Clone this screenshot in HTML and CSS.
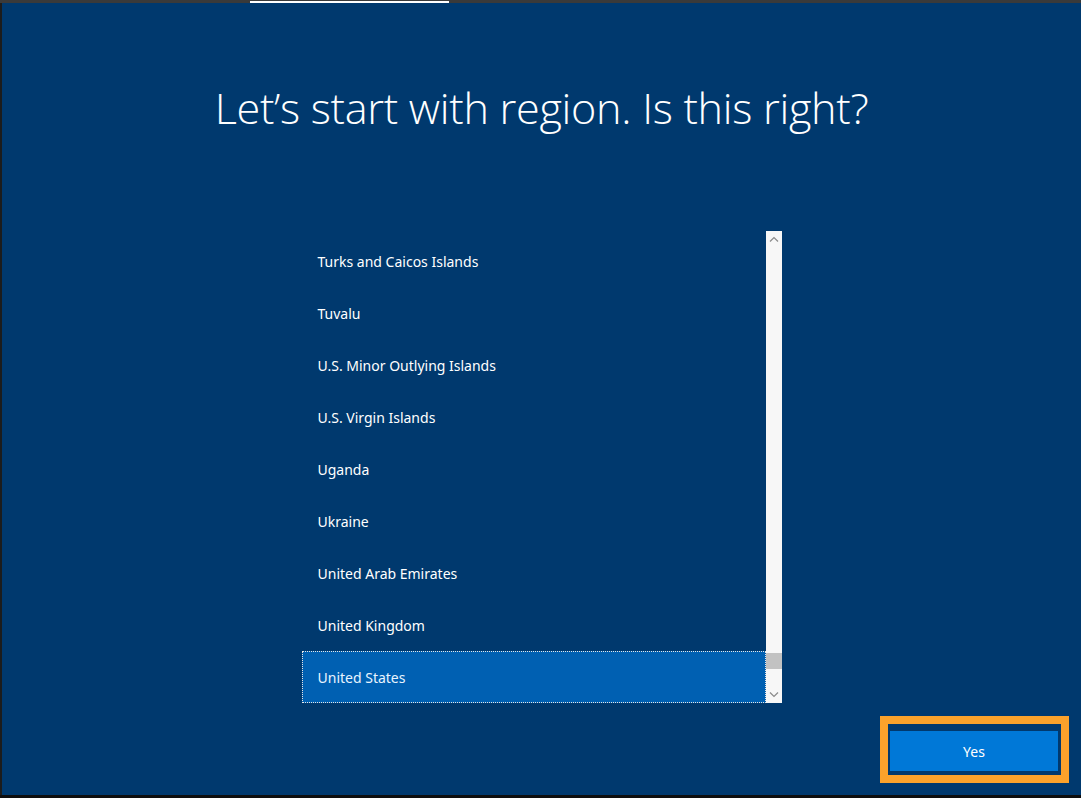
FILE: index.html
```html
<!DOCTYPE html>
<html lang="en">
<head>
<meta charset="utf-8">
<title>Region</title>
<link rel="stylesheet" href="styles.css">
</head>
<body>
<div class="screen">
  <div class="topbar"><div class="progress"></div></div>
  <div class="middle">
    <div class="side"></div>
    <main class="content">
      <h1 class="title">Let’s start with region. Is this right?</h1>
      <div class="listbox">
        <ul class="list">
          <li class="item">Turks and Caicos Islands</li>
          <li class="item">Tuvalu</li>
          <li class="item">U.S. Minor Outlying Islands</li>
          <li class="item">U.S. Virgin Islands</li>
          <li class="item">Uganda</li>
          <li class="item">Ukraine</li>
          <li class="item">United Arab Emirates</li>
          <li class="item">United Kingdom</li>
          <li class="item selected">United States</li>
        </ul>
        <div class="scrollbar">
          <div class="arrow">
            <svg width="10" height="6" viewBox="0 0 10 6"><path d="M1 5.5 L5 1.5 L9 5.5" fill="none" stroke="#8a8a8a" stroke-width="1.2"/></svg>
          </div>
          <div class="track"><div class="thumb"></div></div>
          <div class="arrow">
            <svg width="10" height="6" viewBox="0 0 10 6"><path d="M1 0.5 L5 4.5 L9 0.5" fill="none" stroke="#8a8a8a" stroke-width="1.2"/></svg>
          </div>
        </div>
      </div>
      <div class="actions">
        <div class="focus"><button class="yes">Yes</button></div>
      </div>
    </main>
  </div>
  <div class="bottombar"></div>
</div>
</body>
</html>
```

FILE: styles.css
```css
* { box-sizing: border-box; }
html, body {
  margin: 0;
  padding: 0;
  width: 1081px;
  height: 798px;
  overflow: hidden;
  background: #0e0e0e;
}
.screen {
  width: 1081px;
  height: 798px;
  display: flex;
  flex-direction: column;
}
.topbar {
  height: 3px;
  background: #3a3a3a;
  padding-left: 250px;
  display: flex;
  align-items: flex-end;
}
.progress {
  width: 199px;
  height: 2px;
  background: #ffffff;
}
.middle {
  flex: 1;
  display: flex;
}
.side {
  width: 2px;
  background: #1c1c1c;
}
.content {
  flex: 1;
  background: #00396e;
  display: flex;
  flex-direction: column;
  align-items: center;
}
.bottombar {
  height: 3px;
  background: #0e0e0e;
}
.title {
  margin: 75px 0 0 0;
  font-family: "Open Sans", "Noto Sans", sans-serif;
  font-weight: 300;
  font-size: 43.2px;
  line-height: 60px;
  color: #ffffff;
  letter-spacing: -0.3px;
}
.listbox {
  margin-top: 93px;
  width: 480px;
  height: 472px;
  display: flex;
}
.list {
  flex: 1;
  margin: 0;
  padding: 4px 0 0 0;
  list-style: none;
}
.item {
  height: 52px;
  display: flex;
  align-items: center;
  padding-left: 16px;
  font-family: "Noto Sans", "Open Sans", sans-serif;
  font-size: 14px;
  color: #ffffff;
}
.item.selected {
  background: #0060b2;
  border: 1px dotted #e6e6e6;
  padding-left: 15px;
  color: #e8f4ff;
}
.scrollbar {
  width: 16px;
  background: #f7f7f7;
  display: flex;
  flex-direction: column;
}
.arrow {
  height: 16px;
  display: flex;
  align-items: center;
  justify-content: center;
}
.track {
  flex: 1;
  display: flex;
  flex-direction: column;
  justify-content: flex-end;
  padding-bottom: 18px;
}
.thumb {
  height: 16px;
  background: #c2c2c2;
}
.actions {
  margin-top: auto;
  align-self: flex-end;
  padding: 0 12px 12px 0;
}
.focus {
  border: 8px solid #fba22b;
  padding: 7px 3px 4px 2px;
}
.yes {
  display: block;
  width: 168px;
  height: 40px;
  border: 0;
  background: #0078d7;
  color: #ffffff;
  font-family: "Noto Sans", "Open Sans", sans-serif;
  font-size: 14px;
  padding: 0;
}
```
